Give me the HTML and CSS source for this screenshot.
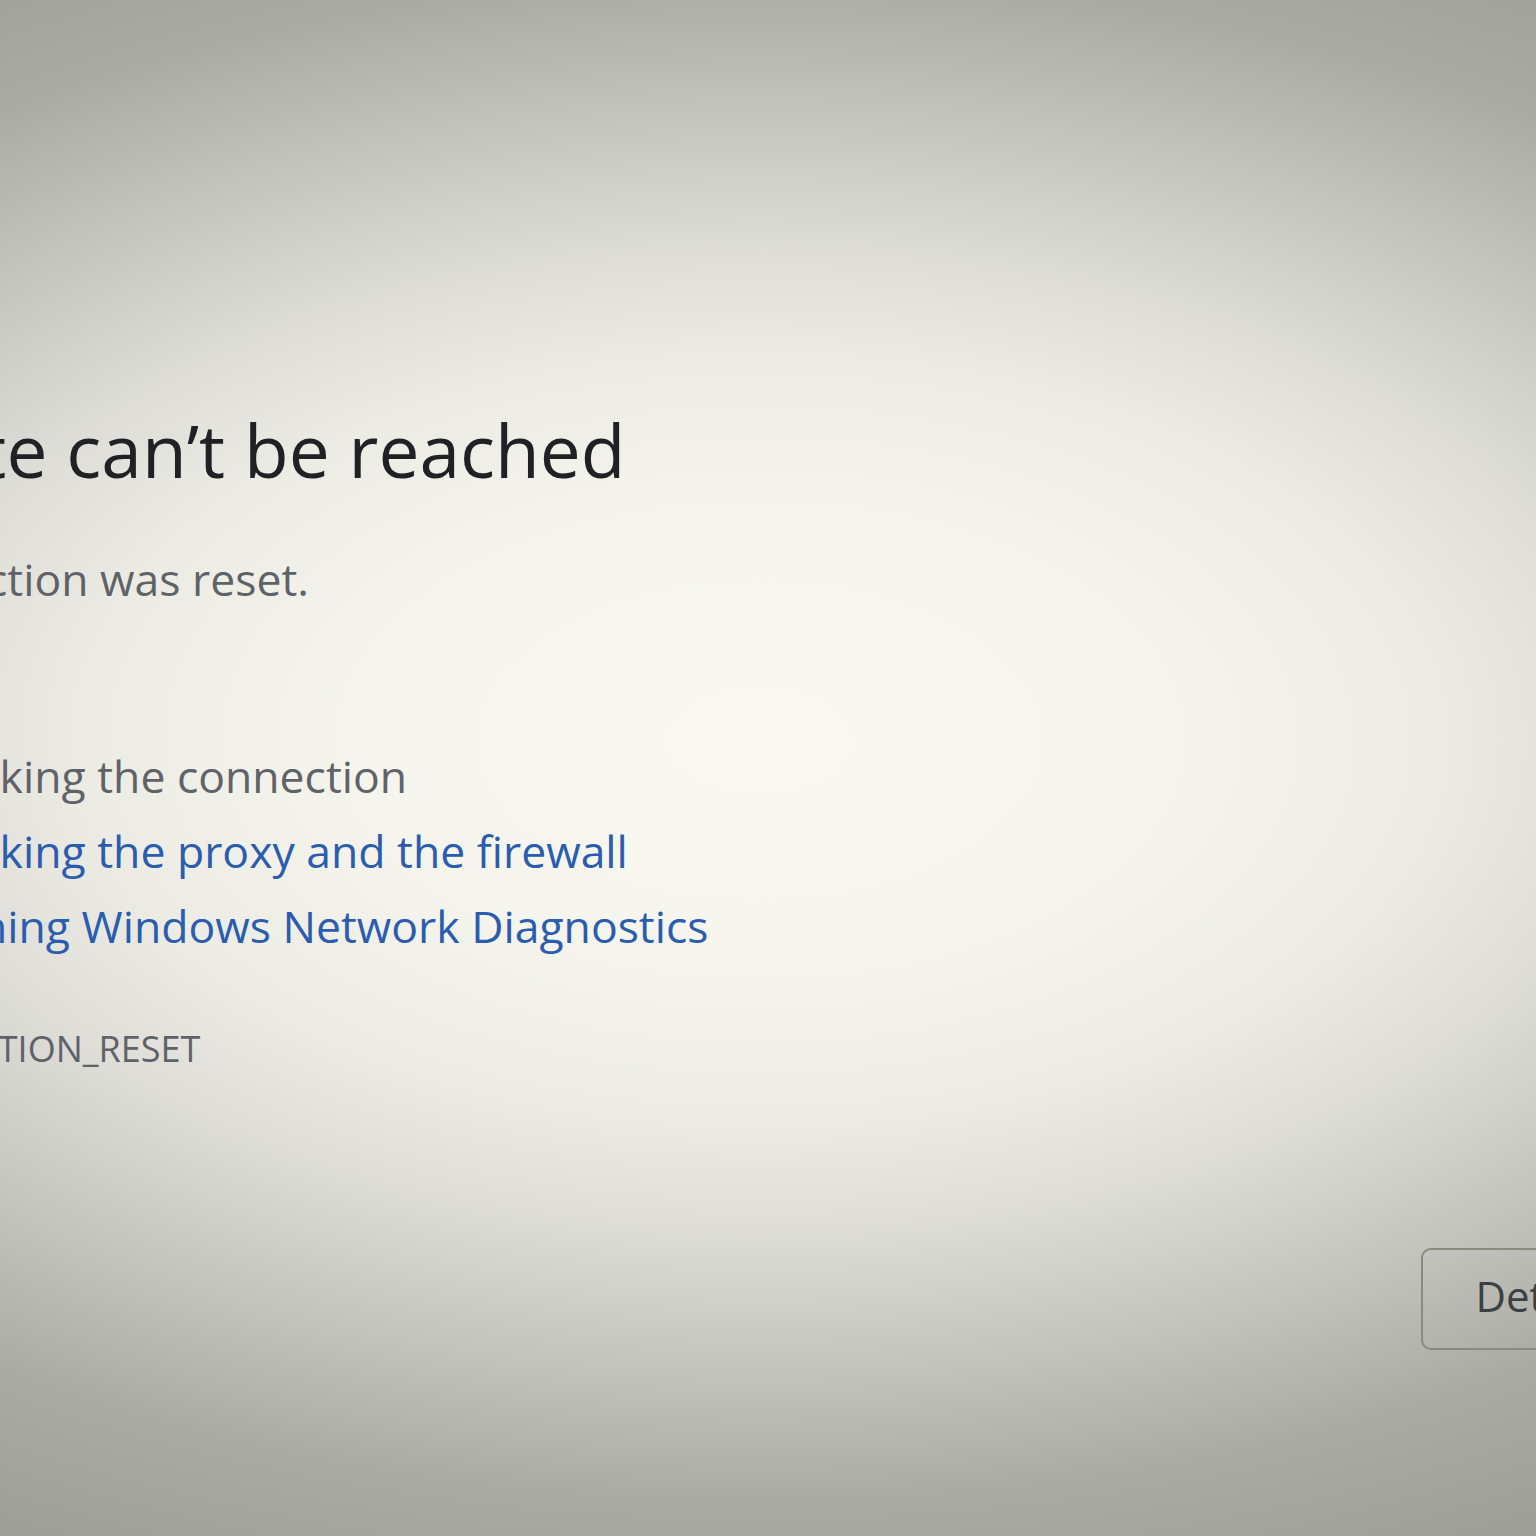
FILE: index.html
```html
<!DOCTYPE html>
<html lang="en">
<head>
    <meta charset="UTF-8">
    <meta name="viewport" content="width=device-width, initial-scale=1.0">
    <title>This site can’t be reached</title>
    <link rel="stylesheet" href="styles.css">
</head>
<body>
    <div class="interstitial-wrapper">
        <div class="main-content">
            <h1>This site can’t be reached</h1>
            <p class="main-message">The connection was reset.</p>

            <div class="suggestions">
                <p class="try">Try:</p>
                <ul>
                    <li>Checking the connection</li>
                    <li><a href="#">Checking the proxy and the firewall</a></li>
                    <li><a href="#">Running Windows Network Diagnostics</a></li>
                </ul>
            </div>

            <div class="error-code">ERR_CONNECTION_RESET</div>
        </div>

        <div class="nav-wrapper">
            <button class="details-button">Details</button>
        </div>
    </div>
</body>
</html>
```

FILE: styles.css
```css
html {
    background: radial-gradient(ellipse 1350px 760px at 760px 740px,
        #f9f9f2 0%,
        #f5f5ee 30%,
        #ecece5 50%,
        #dddcd6 65%,
        #c8c8c2 80%,
        #aaaba5 100%,
        #999a94 125%);
    background-color: #a9aaa4;
    height: 100%;
}

body {
    margin: 0;
    overflow: hidden;
    font-family: "Open Sans", "Noto Sans", sans-serif;
    font-size: 44.5px;
    color: #5f6368;
}

.interstitial-wrapper {
    width: 1893px;
    margin-left: -230px;
    padding-top: 404px;
}

h1 {
    margin: 0;
    font-size: 73px;
    font-weight: normal;
    line-height: 92px;
    color: #202124;
}

.main-message {
    margin: 47px 0 0;
    line-height: 72px;
}

.try {
    margin: 24px 0 0;
    line-height: 72px;
}

ul {
    margin: 27px 0 0;
    padding-left: 128px;
}

li {
    line-height: 75px;
}

a {
    color: #2a5cb0;
    text-decoration: none;
}

.error-code {
    margin-top: 57px;
    font-size: 36px;
    line-height: 58px;
    color: #5f6368;
}

.nav-wrapper {
    display: flex;
    justify-content: flex-end;
    margin-top: 170px;
}

.details-button {
    font-family: inherit;
    font-size: 42px;
    line-height: 50px;
    padding: 21px 52px 27px;
    color: #3c4043;
    background: transparent;
    border: 2px solid #8d8a7c;
    border-radius: 10px;
}
```
